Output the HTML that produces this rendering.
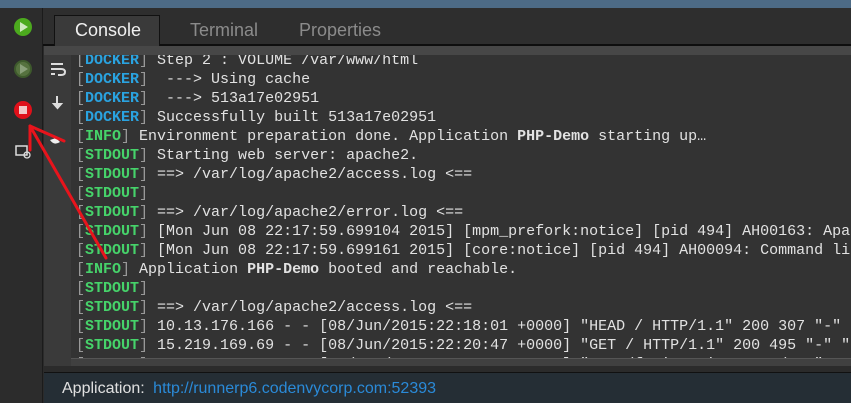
<!DOCTYPE html>
<html><head><style>
*{margin:0;padding:0;box-sizing:border-box}
html,body{width:851px;height:403px;overflow:hidden}
body{background:#2b2b2b;position:relative;font-family:"Liberation Sans",sans-serif}
.top{position:absolute;left:0;top:0;width:851px;height:8px;background:#4d6b86}
.side{position:absolute;left:0;top:8px;width:43px;height:395px;background:#2c2c2c;border-right:1px solid #1b1b1b}
.tabs{position:absolute;left:43px;top:8px;width:808px;height:38px;background:#2e2e2e;border-bottom:2px solid #0e0e0e}
.tab{position:absolute;top:8px;height:30px;font-size:18px;color:#8b8b8b;line-height:28px}
.act{left:11px;width:106px;background:#3a3a3a;color:#f0f0f0;padding-left:20px;border:1px solid #111;border-bottom:none;top:7px;height:31px}
.hdr{position:absolute;left:44px;top:46px;width:807px;height:9px;background:#474747}
.tools{position:absolute;left:44px;top:55px;width:27px;height:311px;background:#3a3a3a}
.con{position:absolute;left:71px;top:55px;width:780px;height:303px;background:#333;overflow:hidden;font-family:"Liberation Mono",monospace;font-size:15px;color:#e2e2e2}
.con div{height:19px;line-height:19px;padding-left:5px;white-space:pre}
.sb{position:absolute;left:71px;top:358px;width:780px;height:8px;background:#404040;border-top:1px solid #555}
.b{color:#999}.d{color:#2aa3e0;font-weight:bold}.g{color:#46d36a;font-weight:bold}
.foot{position:absolute;left:44px;top:372px;width:807px;height:31px;background:#252e35;border-top:1px solid #111;font-size:16px;color:#e0e0e0;line-height:31px;padding-left:18px}
.foot a{color:#2a8ad8;text-decoration:none;margin-left:4px}
</style></head><body>
<div class="top"></div>
<div class="side"></div>
<div class="tabs">
<div class="tab act">Console</div>
<div class="tab" style="left:147px">Terminal</div>
<div class="tab" style="left:256px">Properties</div>
</div>
<div class="hdr"></div>
<div class="tools"></div>
<div class="con"><div style="margin-top:-4px"><span class="b">[</span><span class="d">DOCKER</span><span class="b">]</span> Step 2 : VOLUME /var/www/html</div><div><span class="b">[</span><span class="d">DOCKER</span><span class="b">]</span>  ---&gt; Using cache</div><div><span class="b">[</span><span class="d">DOCKER</span><span class="b">]</span>  ---&gt; 513a17e02951</div><div><span class="b">[</span><span class="d">DOCKER</span><span class="b">]</span> Successfully built 513a17e02951</div><div><span class="b">[</span><span class="g">INFO</span><span class="b">]</span> Environment preparation done. Application <b>PHP-Demo</b> starting up…</div><div><span class="b">[</span><span class="g">STDOUT</span><span class="b">]</span> Starting web server: apache2.</div><div><span class="b">[</span><span class="g">STDOUT</span><span class="b">]</span> ==&gt; /var/log/apache2/access.log &lt;==</div><div><span class="b">[</span><span class="g">STDOUT</span><span class="b">]</span></div><div><span class="b">[</span><span class="g">STDOUT</span><span class="b">]</span> ==&gt; /var/log/apache2/error.log &lt;==</div><div><span class="b">[</span><span class="g">STDOUT</span><span class="b">]</span> [Mon Jun 08 22:17:59.699104 2015] [mpm_prefork:notice] [pid 494] AH00163: Apache</div><div><span class="b">[</span><span class="g">STDOUT</span><span class="b">]</span> [Mon Jun 08 22:17:59.699161 2015] [core:notice] [pid 494] AH00094: Command line</div><div><span class="b">[</span><span class="g">INFO</span><span class="b">]</span> Application <b>PHP-Demo</b> booted and reachable.</div><div><span class="b">[</span><span class="g">STDOUT</span><span class="b">]</span></div><div><span class="b">[</span><span class="g">STDOUT</span><span class="b">]</span> ==&gt; /var/log/apache2/access.log &lt;==</div><div><span class="b">[</span><span class="g">STDOUT</span><span class="b">]</span> 10.13.176.166 - - [08/Jun/2015:22:18:01 +0000] "HEAD / HTTP/1.1" 200 307 "-" "</div><div><span class="b">[</span><span class="g">STDOUT</span><span class="b">]</span> 15.219.169.69 - - [08/Jun/2015:22:20:47 +0000] "GET / HTTP/1.1" 200 495 "-" "M</div><div><span class="b">[</span><span class="g">STDOUT</span><span class="b">]</span> 15.219.169.69 - - [08/Jun/2015:22:20:49 +0000] "GET /favicon.ico HTTP/1.1" 404</div></div>
<div class="sb"></div>
<div class="foot">Application: <a>http://runnerp6.codenvycorp.com:52393</a></div>
<svg width="851" height="403" style="position:absolute;left:0;top:0">
<circle cx="23" cy="27" r="9" fill="#4caa1e"/><path d="M20 22 L28 27 L20 32Z" fill="#cfe9c0"/>
<circle cx="23" cy="69" r="8" fill="#56723f" stroke="#3e5a2c" stroke-width="2"/><path d="M20 64 L28 69 L20 74Z" fill="#8aa07a"/>
<circle cx="23" cy="110" r="9" fill="#e0101a"/><rect x="19" y="106" width="8" height="8" fill="#f2c8c8"/>
<rect x="16" y="146" width="11" height="9" fill="none" stroke="#ddd" stroke-width="1.5"/><circle cx="27" cy="155" r="3" fill="none" stroke="#ddd" stroke-width="1.3"/>
<g stroke="#ddd" stroke-width="2" fill="none"><path d="M51 64h12M51 69h10q4 0 4 3t-4 3h-3M51 74h4"/></g>
<path d="M57 96v8M54 104h7l-3.5 4z" stroke="#ddd" stroke-width="2" fill="#ddd"/>
<path d="M50 140q4 6 10 2l-4-4z" fill="#eee"/>
<g stroke="#e8141c" stroke-width="3" fill="none" stroke-linecap="round"><path d="M30 126 L106 258"/><path d="M30 126 L30 150"/><path d="M30 126 L64 141"/></g>
</svg>
</body></html>
